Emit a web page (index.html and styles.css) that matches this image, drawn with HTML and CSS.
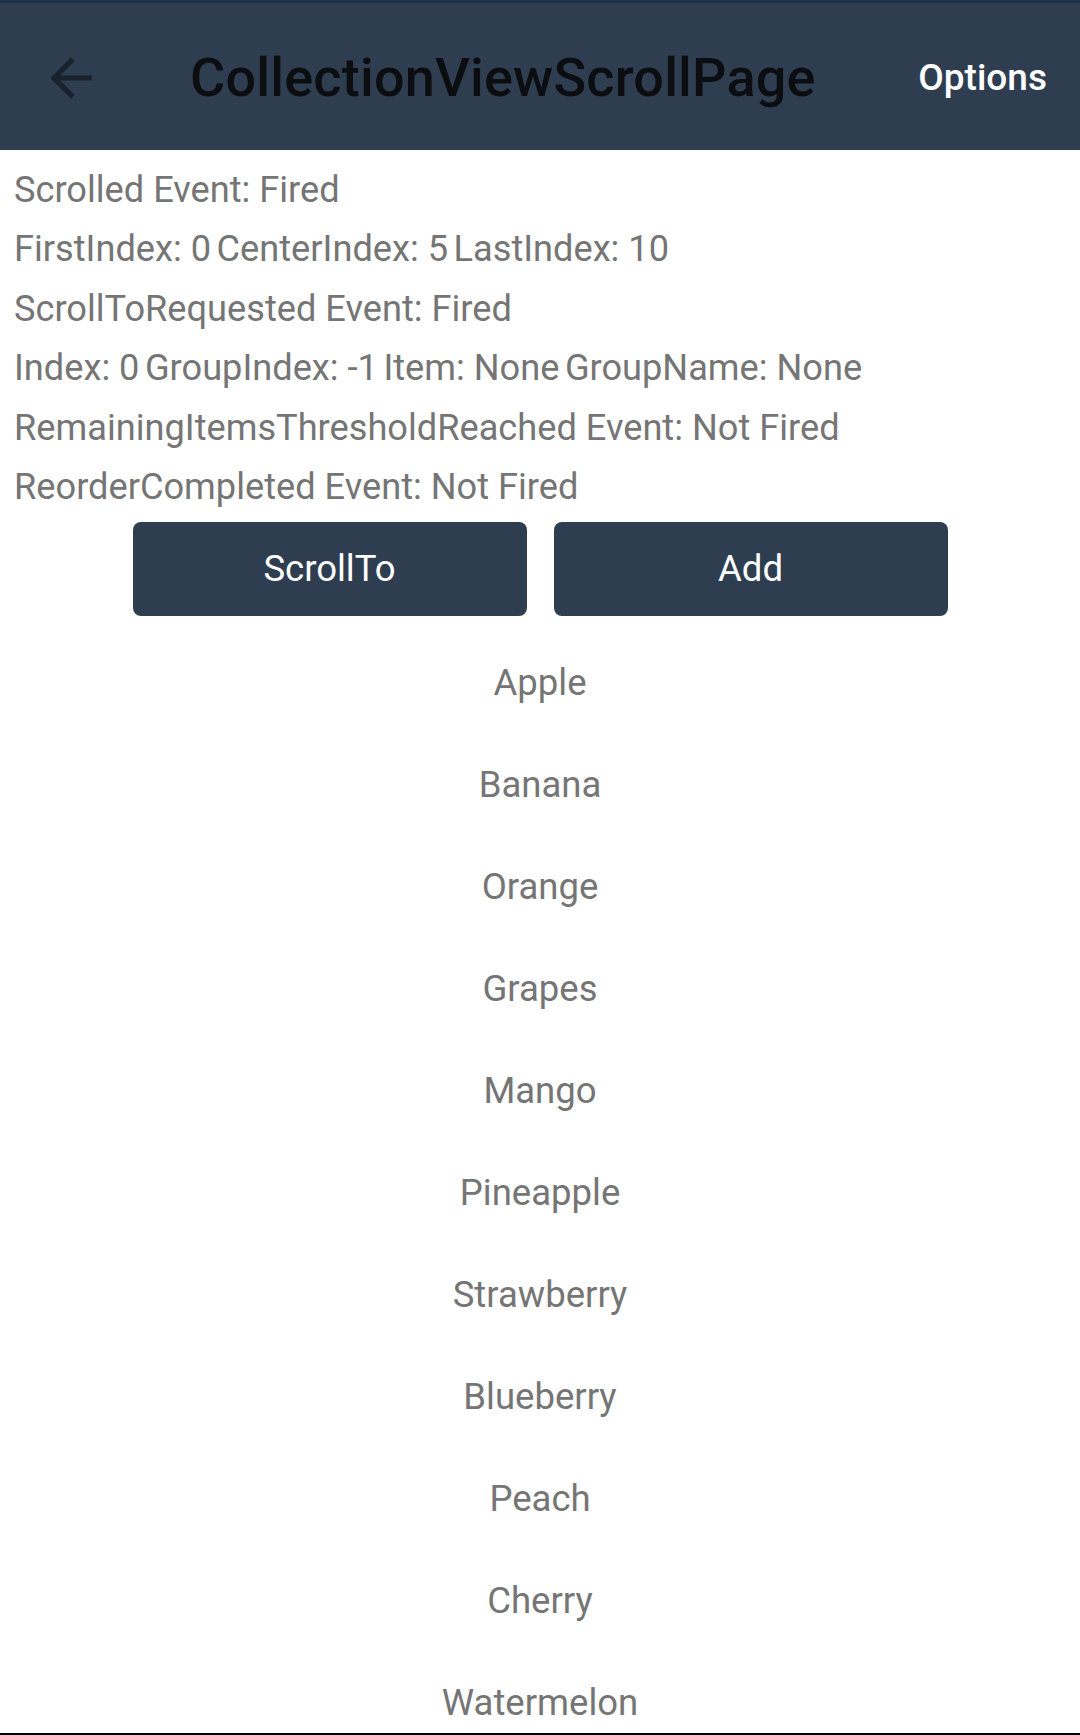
FILE: index.html
```html
<!DOCTYPE html>
<html lang="en">
<head>
<meta charset="utf-8">
<title>CollectionViewScrollPage</title>
<link rel="stylesheet" href="styles.css">
</head>
<body>
<div class="screen">
  <header class="toolbar">
    <button class="back" aria-label="Back">
      <svg viewBox="0 0 24 24" width="62" height="62"><path d="M20 11H7.83l5.59-5.59L12 4l-8 8 8 8 1.41-1.41L7.83 13H20v-2z" fill="#18212c"/></svg>
    </button>
    <h1 class="title">CollectionViewScrollPage</h1>
    <span class="options">Options</span>
  </header>
  <main class="content">
    <section class="status">
      <p class="label">Scrolled Event: Fired</p>
      <p class="label row"><span>FirstIndex: 0</span><span>CenterIndex: 5</span><span>LastIndex: 10</span></p>
      <p class="label">ScrollToRequested Event: Fired</p>
      <p class="label row"><span>Index: 0</span><span>GroupIndex: -1</span><span>Item: None</span><span>GroupName: None</span></p>
      <p class="label">RemainingItemsThresholdReached Event: Not Fired</p>
      <p class="label">ReorderCompleted Event: Not Fired</p>
    </section>
    <div class="actions">
      <button class="btn">ScrollTo</button>
      <button class="btn">Add</button>
    </div>
    <ul class="list">
      <li>Apple</li>
      <li>Banana</li>
      <li>Orange</li>
      <li>Grapes</li>
      <li>Mango</li>
      <li>Pineapple</li>
      <li>Strawberry</li>
      <li>Blueberry</li>
      <li>Peach</li>
      <li>Cherry</li>
      <li>Watermelon</li>
    </ul>
  </main>
  <div class="navline"></div>
</div>
</body>
</html>
```
FILE: styles.css
```css
html, body {
  margin: 0;
  padding: 0;
  background: #ffffff;
}
body {
  font-family: Roboto, "Noto Sans", "Liberation Sans", sans-serif;
  overflow: hidden;
}
.screen {
  width: 1080px;
  height: 1735px;
  display: flex;
  flex-direction: column;
  overflow: hidden;
}
.toolbar {
  flex: 0 0 auto;
  height: 147px;
  border-top: 3px solid #1d3248;
  background: #2e3e50;
  display: flex;
  align-items: center;
  padding: 0 33px 0 40px;
}
.back {
  background: none;
  border: 0;
  padding: 0;
  width: 62px;
  height: 62px;
  display: flex;
  margin-top: 2px;
}
.title {
  margin: 2px 0 0 88px;
  flex: 1;
  font-size: 54px;
  font-weight: 500;
  color: #0b0d10;
  letter-spacing: 0.2px;
}
.options {
  font-size: 37px;
  font-weight: 500;
  color: #ffffff;
  margin-top: 2px;
}
.content {
  flex: 1;
  overflow: hidden;
}
.status {
  padding: 9.5px 14px 0;
}
.label {
  margin: 0;
  font-size: 36.2px;
  line-height: 59.5px;
  color: #757575;
  white-space: nowrap;
}
.row {
  display: flex;
  gap: 5.5px;
}
.actions {
  display: flex;
  justify-content: center;
  gap: 27px;
  margin-top: 5px;
}
.btn {
  width: 394px;
  height: 94px;
  border: 0;
  border-radius: 8px;
  background: #2e3e50;
  color: #ffffff;
  font-family: Roboto, "Noto Sans", sans-serif;
  font-size: 36.5px;
  padding: 0;
}
.list {
  list-style: none;
  margin: 0;
  padding: 16.5px 0 0;
}
.list li {
  height: 102px;
  line-height: 102px;
  text-align: center;
  font-size: 36.5px;
  color: #757575;
}
.navline {
  flex: 0 0 2px;
  background: #000000;
}
```
